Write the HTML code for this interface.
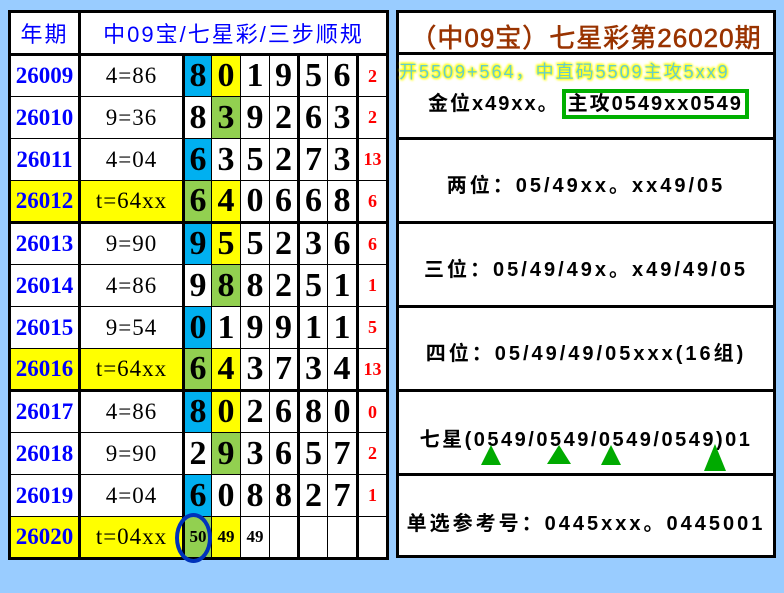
<!DOCTYPE html>
<html><head><meta charset="utf-8"><style>
*{margin:0;padding:0;box-sizing:border-box}
body{width:784px;height:593px;background:#99ccff;position:relative;overflow:hidden;font-family:"Liberation Serif","Noto Serif CJK SC",serif}
table{position:absolute;left:8px;top:10px;border-collapse:collapse;table-layout:fixed;background:#fff;border:3px solid #000}
td{border:1px solid #000;text-align:center;vertical-align:middle;height:42px;padding:0;overflow:visible;white-space:nowrap}
tr.h td{height:43px;color:#0000ff;font-family:"Liberation Sans","Noto Sans CJK SC",sans-serif;font-size:22px;letter-spacing:2px;border-bottom:3px solid #000}
td.p{color:#0000ff;font-weight:bold;font-size:23px;border-right:3px solid #000}
td.e{font-size:23px;letter-spacing:1px;border-right:3px solid #000}
td.d{font-weight:bold;font-size:34px}
td.r{color:#ff0000;font-weight:bold;font-size:18px;border-left:3px solid #000}
td.t{border-left:3px solid #000}
tr.tb td{border-bottom:3px solid #000}
.B{background:#00b0f0}.Y{background:#ffff00}.G{background:#92d050}
#rp{position:absolute;left:396px;top:10px;width:380px;height:548px;background:#fff;border:3px solid #000}
.sec{position:absolute;left:0;width:374px;border-top:3px solid #000}
.ln{position:absolute;left:0;width:374px;text-align:center;font-family:"Liberation Sans","Noto Sans CJK SC",sans-serif;font-weight:bold;font-size:20px;letter-spacing:3px;color:#000;white-space:nowrap}
.tri{position:absolute;width:0;height:0;border-left:10px solid transparent;border-right:10px solid transparent;border-bottom:20px solid #00aa00}
</style></head><body>
<table>
<colgroup><col style="width:70px"><col style="width:104px"><col style="width:28px"><col style="width:29px"><col style="width:29px"><col style="width:29px"><col style="width:29px"><col style="width:30px"><col style="width:30px"></colgroup>
<tr class="h"><td style="border-right:3px solid #000">年期</td><td colspan="8">中09宝/七星彩/三步顺规</td></tr>
<tr><td class="p">26009</td><td class="e">4=86</td><td class="d B">8</td><td class="d Y">0</td><td class="d">1</td><td class="d">9</td><td class="d t">5</td><td class="d">6</td><td class="r">2</td></tr>
<tr><td class="p">26010</td><td class="e">9=36</td><td class="d">8</td><td class="d G">3</td><td class="d">9</td><td class="d">2</td><td class="d t">6</td><td class="d">3</td><td class="r">2</td></tr>
<tr><td class="p">26011</td><td class="e">4=04</td><td class="d B">6</td><td class="d">3</td><td class="d">5</td><td class="d">2</td><td class="d t">7</td><td class="d">3</td><td class="r">13</td></tr>
<tr class="tb"><td class="p Y">26012</td><td class="e Y">t=64xx</td><td class="d G">6</td><td class="d Y">4</td><td class="d">0</td><td class="d">6</td><td class="d t">6</td><td class="d">8</td><td class="r">6</td></tr>
<tr><td class="p">26013</td><td class="e">9=90</td><td class="d B">9</td><td class="d Y">5</td><td class="d">5</td><td class="d">2</td><td class="d t">3</td><td class="d">6</td><td class="r">6</td></tr>
<tr><td class="p">26014</td><td class="e">4=86</td><td class="d">9</td><td class="d G">8</td><td class="d">8</td><td class="d">2</td><td class="d t">5</td><td class="d">1</td><td class="r">1</td></tr>
<tr><td class="p">26015</td><td class="e">9=54</td><td class="d B">0</td><td class="d">1</td><td class="d">9</td><td class="d">9</td><td class="d t">1</td><td class="d">1</td><td class="r">5</td></tr>
<tr class="tb"><td class="p Y">26016</td><td class="e Y">t=64xx</td><td class="d G">6</td><td class="d Y">4</td><td class="d">3</td><td class="d">7</td><td class="d t">3</td><td class="d">4</td><td class="r">13</td></tr>
<tr><td class="p">26017</td><td class="e">4=86</td><td class="d B">8</td><td class="d Y">0</td><td class="d">2</td><td class="d">6</td><td class="d t">8</td><td class="d">0</td><td class="r">0</td></tr>
<tr><td class="p">26018</td><td class="e">9=90</td><td class="d">2</td><td class="d G">9</td><td class="d">3</td><td class="d">6</td><td class="d t">5</td><td class="d">7</td><td class="r">2</td></tr>
<tr><td class="p">26019</td><td class="e">4=04</td><td class="d B">6</td><td class="d">0</td><td class="d">8</td><td class="d">8</td><td class="d t">2</td><td class="d">7</td><td class="r">1</td></tr>
<tr><td class="p Y">26020</td><td class="e Y">t=04xx</td><td class="G" style="font-weight:bold;font-size:17px">50</td><td class="Y" style="font-weight:bold;font-size:17px">49</td><td style="font-weight:bold;font-size:17px">49</td><td></td><td class="t"></td><td></td><td class="r"></td></tr>
</table>
<div style="position:absolute;left:175px;top:513px;width:37px;height:50px;border:4px solid #0033bb;border-radius:50%"></div>
<div id="rp">
<div class="ln" style="top:5px;font-size:26px;color:#993300;font-weight:normal;letter-spacing:1px;-webkit-text-stroke:0.6px #993300">（中09宝）七星彩第26020期</div>
<div class="sec" style="top:39px"></div>
<div style="position:absolute;left:0;top:45px;font-family:'Liberation Sans','Noto Sans CJK SC',sans-serif;font-size:18px;letter-spacing:2px;color:#66cccc;text-shadow:0 0 2px #ffff00,0 0 3px #ffff00,1px 1px 2px #ffff00,-1px -1px 2px #ffff00;white-space:nowrap">开5509+564，中直码5509主攻5xx9</div>
<div style="position:absolute;left:29px;top:74px;font-family:'Liberation Sans','Noto Sans CJK SC',sans-serif;font-weight:bold;font-size:20px;letter-spacing:2px;white-space:nowrap">金位x49xx。<span style="border:4px solid #00b000;padding:0 2px;margin-left:2px">主攻0549xx0549</span></div>
<div class="sec" style="top:124px"></div>
<div class="ln" style="top:156px">两位：05/49xx。xx49/05</div>
<div class="sec" style="top:208px"></div>
<div class="ln" style="top:240px">三位：05/49/49x。x49/49/05</div>
<div class="sec" style="top:292px"></div>
<div class="ln" style="top:324px">四位：05/49/49/05xxx(16组)</div>
<div class="sec" style="top:376px"></div>
<div class="ln" style="top:410px;letter-spacing:2.5px">七星(0549/0549/0549/0549)01</div>
<div class="tri" style="left:82px;top:432px"></div>
<div class="tri" style="left:148px;top:432px;border-left-width:12px;border-right-width:12px;border-bottom-width:19px"></div>
<div class="tri" style="left:202px;top:432px"></div>
<div class="tri" style="left:305px;top:431px;border-left-width:11px;border-right-width:11px;border-bottom-width:27px"></div>
<div class="sec" style="top:460px"></div>
<div class="ln" style="top:494px">单选参考号：0445xxx。0445001</div>
</div>
</body></html>
